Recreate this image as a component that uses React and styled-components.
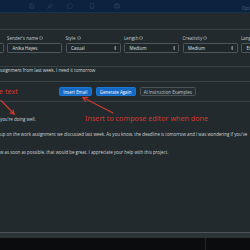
import React from "react"
import styled, { createGlobalStyle } from "styled-components"
import { Save, Feather, MessageCircle, Smartphone, Briefcase, Info } from "lucide-react"

const GlobalStyle = createGlobalStyle`
  html, body {
    margin: 0;
    padding: 0;
    background: #222a2d;
  }
  body {
    font-family: "Open Sans", "Noto Sans", sans-serif;
  }
`;

const Page = styled.div`
  position: relative;
  width: 250px;
  height: 250px;
  overflow: hidden;
  display: flex;
  flex-direction: column;
  background: #222a2d;
  color: #c8cdd0;
`;

const TopBar = styled.div`
  height: 12px;
  flex-shrink: 0;
  display: flex;
  align-items: center;
  padding-left: 29px;
  background: #0b233e;
  border-bottom: 1px solid #17324f;
`;

const TopIcon = styled.span`
  display: flex;
  margin-right: ${(p) => p.$gap}px;
  color: #2c4763;
`;

const Options = styled.span`
  margin-left: auto;
  margin-right: -8px;
  padding-top: 3px;
  font-size: 4.4px;
  color: #4d6580;
  white-space: nowrap;
`;

const Header = styled.div`
  height: 16px;
  flex-shrink: 0;
  border-bottom: 1px solid #394346;
`;

const Fields = styled.div`
  display: flex;
  gap: 3.5px;
  margin-left: -51.5px;
  padding-top: 4px;
  flex-shrink: 0;
`;

const Field = styled.div`
  width: 55px;
  flex-shrink: 0;
`;

const Label = styled.div`
  height: 7px;
  display: flex;
  align-items: center;
  gap: 1px;
  margin-bottom: 2.3px;
  font-size: 4.5px;
  color: #c3c9cc;
  white-space: nowrap;
`;

const Box = styled.div`
  box-sizing: border-box;
  height: 9.5px;
  display: flex;
  align-items: center;
  justify-content: space-between;
  padding: 0 3px 0 4.5px;
  border: 1px solid #4f595c;
  border-radius: 1.5px;
  background: #20272a;
  font-size: 4.4px;
  color: #dde1e3;
  white-space: nowrap;
`;

const Instruction = styled.div`
  box-sizing: border-box;
  height: 16.5px;
  margin-top: 13px;
  flex-shrink: 0;
  border-top: 1px solid #394346;
  border-bottom: 1px solid #394346;
  font-size: 4.5px;
  line-height: 7px;
  color: #d6dadc;
  white-space: nowrap;
`;

const ButtonRow = styled.div`
  position: relative;
  box-sizing: border-box;
  height: 20px;
  flex-shrink: 0;
  display: flex;
  align-items: center;
  gap: 4px;
  padding-left: 59px;
  border-bottom: 1px solid #394346;
`;

const Button = styled.button`
  box-sizing: border-box;
  height: 9px;
  padding: 0 3.2px;
  border-radius: 1.5px;
  font-family: inherit;
  font-size: 4.4px;
  white-space: nowrap;
  cursor: pointer;
  border: 1px solid ${(p) => (p.$outline ? "#4a5457" : "#1c77d2")};
  background: ${(p) => (p.$outline ? "#252d30" : "#1469c4")};
  color: ${(p) => (p.$outline ? "#c3c9cc" : "#ffffff")};
`;

const EmailBody = styled.div`
  flex: 1;
  padding-top: 13.5px;
  border-bottom: 1px solid #4b5558;
  font-size: 4.4px;
  line-height: 7px;
  color: #d0d5d7;
  white-space: nowrap;
`;

const Paragraph = styled.p`
  margin: 0 0 ${(p) => p.$after}px;
`;

const StatusBand = styled.div`
  height: 5px;
  flex-shrink: 0;
  background: #2a3336;
`;

const Footer = styled.div`
  height: 12px;
  flex-shrink: 0;
  display: flex;
  background: #0b0c0d;
`;

const FooterCell = styled.div`
  width: ${(p) => p.$width}px;
  border-right: 1px solid #25282b;
`;

const Note = styled.span`
  position: absolute;
  left: ${(p) => p.$x}px;
  top: ${(p) => p.$y}px;
  font-family: "Noto Sans", "Open Sans", sans-serif;
  font-size: 7.2px;
  line-height: 9px;
  color: #d0392f;
  white-space: nowrap;
`;

const Arrows = styled.svg`
  position: absolute;
  left: 0;
  top: 0;
  pointer-events: none;
`;

const SelectArrow = () => (
  <svg width="2.4" height="4" viewBox="0 0 6 10">
    <path d="M3 0 L6 4 H0 Z M3 10 L6 6 H0 Z" fill="#c3c9cc" />
  </svg>
);

const fields = [
  { label: "", value: "", select: false },
  { label: "Sender's name", value: "Anika Hayes", select: false },
  { label: "Style", value: "Casual", select: true },
  { label: "Length", value: "Medium", select: true },
  { label: "Creativity", value: "Medium", select: true },
  { label: "Language", value: "English", select: true },
];

export default function App() {
  return (
    <>
      <GlobalStyle />
      <Page>
        <TopBar>
          <TopIcon $gap={12}><Save size={6} strokeWidth={2} /></TopIcon>
          <TopIcon $gap={14}><Feather size={6} strokeWidth={2} /></TopIcon>
          <TopIcon $gap={16}><MessageCircle size={6} strokeWidth={2} /></TopIcon>
          <TopIcon $gap={19}><Smartphone size={6} strokeWidth={2} /></TopIcon>
          <TopIcon $gap={0}><Briefcase size={6} strokeWidth={2} /></TopIcon>
          <Options>Options</Options>
        </TopBar>
        <Header />
        <Fields>
          {fields.map((f, i) => (
            <Field key={i}>
              <Label>
                {f.label}
                {f.label && <Info size={4} strokeWidth={2} />}
              </Label>
              <Box>
                <span>{f.value}</span>
                {f.select && <SelectArrow />}
              </Box>
            </Field>
          ))}
        </Fields>
        <Instruction>ssignment from last week, I need it tomorrow</Instruction>
        <ButtonRow>
          <Button>Insert Email</Button>
          <Button>Generate Again</Button>
          <Button $outline>AI Instruction Examples</Button>
        </ButtonRow>
        <EmailBody>
          <Paragraph $after={8.5}>you're doing well.</Paragraph>
          <Paragraph $after={10.7}>
            up on the work assignment we discussed last week. As you know, the deadline is tomorrow and I was wondering if you've
          </Paragraph>
          <Paragraph $after={0}>
            w as soon as possible, that would be great. I appreciate your help with this project.
          </Paragraph>
        </EmailBody>
        <StatusBand />
        <Footer>
          <FooterCell $width={205} />
        </Footer>

        <Note $x={-1} $y={86.5}>e text</Note>
        <Note $x={85} $y={113.5}>Insert to compose editor when done</Note>
        <Arrows width="250" height="250" viewBox="0 0 250 250">
          <g stroke="#d0392f" strokeWidth="1.2" fill="none" strokeLinecap="round">
            <path d="M1 100.5 L14 114" />
            <path d="M13 110 L14 114 L10.2 112.9" />
            <path d="M113 113 L83 97.5" />
            <path d="M85.7 101.7 L83 97.5 L88 97.3" />
          </g>
        </Arrows>
      </Page>
    </>
  );
}
